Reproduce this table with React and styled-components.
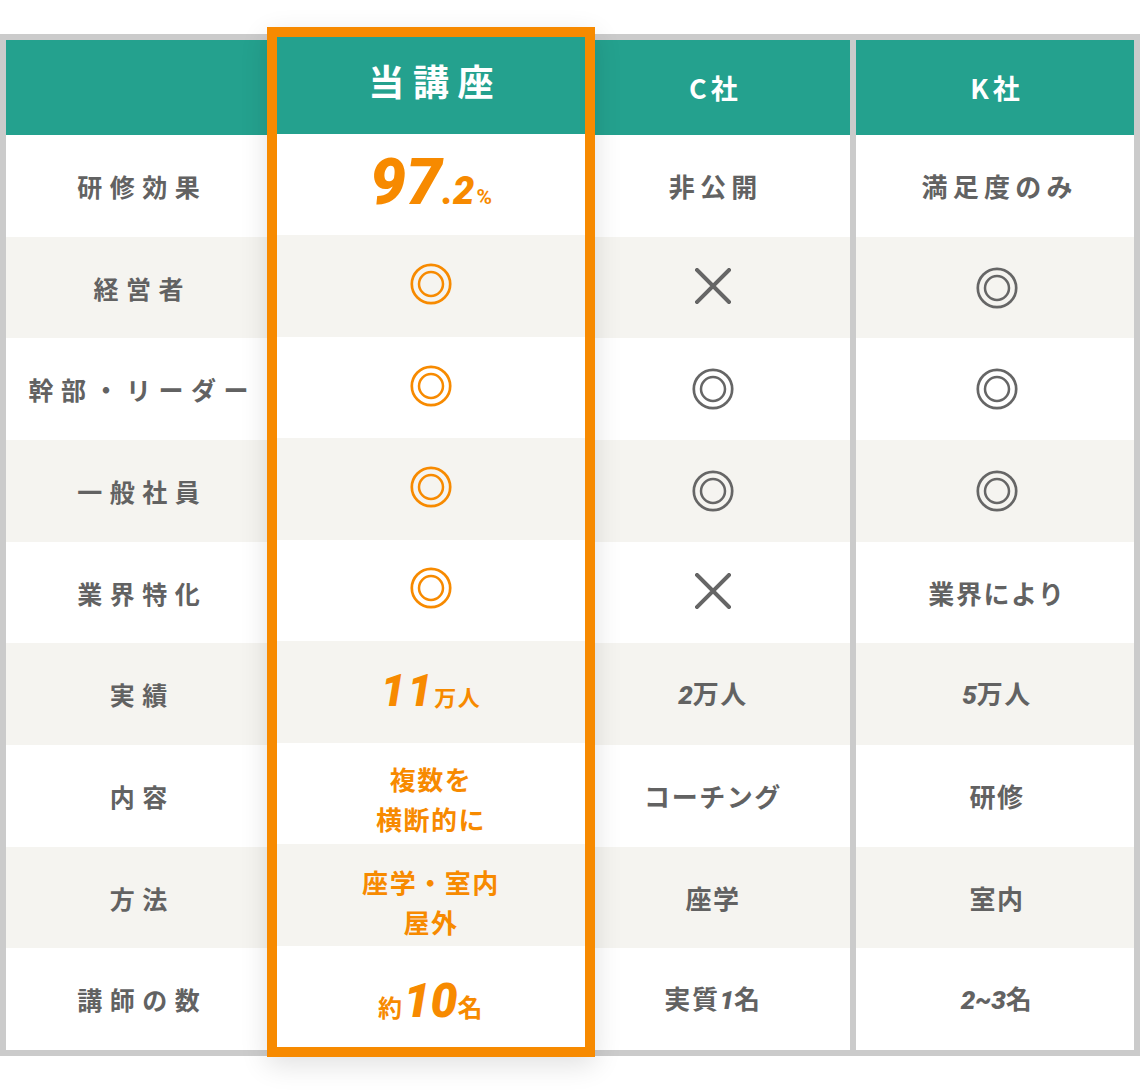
import React from 'react';
import styled, { createGlobalStyle, css } from 'styled-components';

const ORANGE = '#f78a00';
const TEAL = '#24a18e';
const GRAY = '#626262';

const GlobalStyle = createGlobalStyle`
  body {
    margin: 0;
    background: #fff;
    font-family: "Noto Sans CJK JP", "Noto Sans", sans-serif;
  }
`;

const Page = styled.div`
  width: 1140px;
  padding-top: 34px;
  padding-bottom: 35px;
`;

const Frame = styled.div`
  display: flex;
  align-items: flex-start;
  background: #cbcbcb;
  padding: 6px;
`;

const Column = styled.div`
  display: flex;
  flex-direction: column;
  width: ${props => props.$width}px;
  height: 1010px;
  margin-left: ${props => props.$gap || 0}px;
  flex-shrink: 0;
`;

const HighlightColumn = styled(Column)`
  box-sizing: content-box;
  border: 10px solid ${ORANGE};
  margin: -13px 0 -7px;
  position: relative;
  z-index: 1;
  box-shadow: 0 8px 26px rgba(0, 0, 0, 0.12), inset 0 0 12px rgba(0, 0, 0, 0.07);
`;

const HeadCell = styled.div`
  height: ${props => (props.$tall ? 97 : 95)}px;
  flex-shrink: 0;
  background: ${TEAL};
  color: #fff;
  display: flex;
  align-items: center;
  justify-content: center;
  box-sizing: border-box;
  padding: ${props => props.$pad || '0'};
  font-weight: 700;
  font-size: ${props => (props.$big ? 36 : 27)}px;
  letter-spacing: ${props => (props.$big ? '0.24em' : '0.15em')};
  text-indent: ${props => (props.$big ? '0.24em' : '0.15em')};
`;

const Cell = styled.div`
  flex: 1;
  display: flex;
  align-items: center;
  justify-content: center;
  box-sizing: border-box;
  background: ${props => (props.$alt ? '#f5f4f0' : '#fff')};
  padding: ${props => props.$pad || '0'};
  text-align: center;
`;

const Label = styled.span`
  color: ${GRAY};
  font-weight: 700;
  font-size: 25px;
  letter-spacing: 0.3em;
  text-indent: 0.3em;
  white-space: nowrap;
`;

const Value = styled.span`
  color: ${props => (props.$orange ? ORANGE : GRAY)};
  font-weight: 700;
  font-size: 26px;
  line-height: 40px;
  white-space: nowrap;
  margin-top: ${props => props.$shift || 0}px;
  ${props =>
    props.$spaced
      ? css`
          letter-spacing: 0.2em;
          text-indent: 0.2em;
        `
      : css`
          letter-spacing: 0.06em;
        `}
`;

const Num = styled.span`
  font-family: Roboto, "Liberation Sans", sans-serif;
  font-style: italic;
  font-weight: 900;
  font-size: ${props => props.$size}px;
  letter-spacing: ${props => props.$ls || 0}px;
`;

const Small = styled.span`
  font-size: ${props => props.$size}px;
`;

const Rate = styled.div`
  color: ${ORANGE};
  display: flex;
  align-items: baseline;
  line-height: 1;
  margin-top: -4px;
`;

const Percent = styled.span`
  font-family: Roboto, "Liberation Sans", sans-serif;
  font-weight: 700;
  font-size: 21px;
  margin-left: 2px;
`;

const DoubleCircle = ({ color, shift = -4 }) => (
  <svg width="44" height="44" viewBox="0 0 44 44" style={{ marginTop: shift }}>
    <circle cx="22" cy="22" r="19.2" fill="none" stroke={color} strokeWidth="2.7" />
    <circle cx="22" cy="22" r="12" fill="none" stroke={color} strokeWidth="2.5" />
  </svg>
);

const Cross = () => (
  <svg width="36" height="36" viewBox="0 0 36 36" style={{ marginTop: -4 }}>
    <path d="M2 2 L34 34 M34 2 L2 34" stroke="#666" strokeWidth="4" strokeLinecap="square" />
  </svg>
);

const circleO = <DoubleCircle color={ORANGE} />;
const circleG = <DoubleCircle color="#666" shift={0} />;

const rows = [
  {
    label: '研修効果',
    ours: (
      <Rate>
        <Num $size={64}>97</Num>
        <Num $size={38}>.2</Num>
        <Percent>%</Percent>
      </Rate>
    ),
    c: <Value $spaced>非公開</Value>,
    k: <Value $spaced>満足度のみ</Value>,
  },
  { label: '経営者', ours: circleO, c: <Cross />, k: circleG },
  { label: '幹部・リーダー', ours: circleO, c: circleG, k: circleG },
  { label: '一般社員', ours: circleO, c: circleG, k: circleG },
  { label: '業界特化', ours: circleO, c: <Cross />, k: <Value>業界により</Value> },
  {
    label: '実績',
    ours: (
      <Value $orange $shift={4}>
        <Num $size={44} $ls={2}>11</Num>
        <Small $size={22}>万人</Small>
      </Value>
    ),
    c: (
      <Value>
        <Num $size={26}>2</Num>万人
      </Value>
    ),
    k: (
      <Value>
        <Num $size={26}>5</Num>万人
      </Value>
    ),
  },
  {
    label: '内容',
    ours: (
      <Value $orange $shift={12}>
        複数を
        <br />
        横断的に
      </Value>
    ),
    c: <Value>コーチング</Value>,
    k: <Value>研修</Value>,
  },
  {
    label: '方法',
    ours: (
      <Value $orange $shift={14}>
        座学・室内
        <br />
        屋外
      </Value>
    ),
    c: <Value>座学</Value>,
    k: <Value>室内</Value>,
  },
  {
    label: '講師の数',
    ours: (
      <Value $orange $shift={16}>
        <Small $size={24}>約</Small>
        <Num $size={48}>10</Num>
        <Small $size={25}>名</Small>
      </Value>
    ),
    c: (
      <Value>
        実質<Num $size={26}>1</Num>名
      </Value>
    ),
    k: (
      <Value>
        <Num $size={26}>2~3</Num>名
      </Value>
    ),
  },
];

const App = () => (
  <>
    <GlobalStyle />
    <Page>
      <Frame>
        <Column $width={261}>
          <HeadCell />
          {rows.map((r, i) => (
            <Cell key={r.label} $alt={i % 2 === 1} $pad="0 0 0 4px">
              <Label>{r.label}</Label>
            </Cell>
          ))}
        </Column>

        <HighlightColumn $width={308}>
          <HeadCell $tall $big $pad="0 0 12px">当講座</HeadCell>
          {rows.map((r, i) => (
            <Cell key={r.label} $alt={i % 2 === 1}>
              {r.ours}
            </Cell>
          ))}
        </HighlightColumn>

        <Column $width={255}>
          <HeadCell $pad="0 18px 0 0">C社</HeadCell>
          {rows.map((r, i) => (
            <Cell key={r.label} $alt={i % 2 === 1} $pad="0 19px 0 0">
              {r.c}
            </Cell>
          ))}
        </Column>

        <Column $width={278} $gap={6}>
          <HeadCell>K社</HeadCell>
          {rows.map((r, i) => (
            <Cell key={r.label} $alt={i % 2 === 1} $pad="0 0 0 4px">
              {r.k}
            </Cell>
          ))}
        </Column>
      </Frame>
    </Page>
  </>
);

export default App;
